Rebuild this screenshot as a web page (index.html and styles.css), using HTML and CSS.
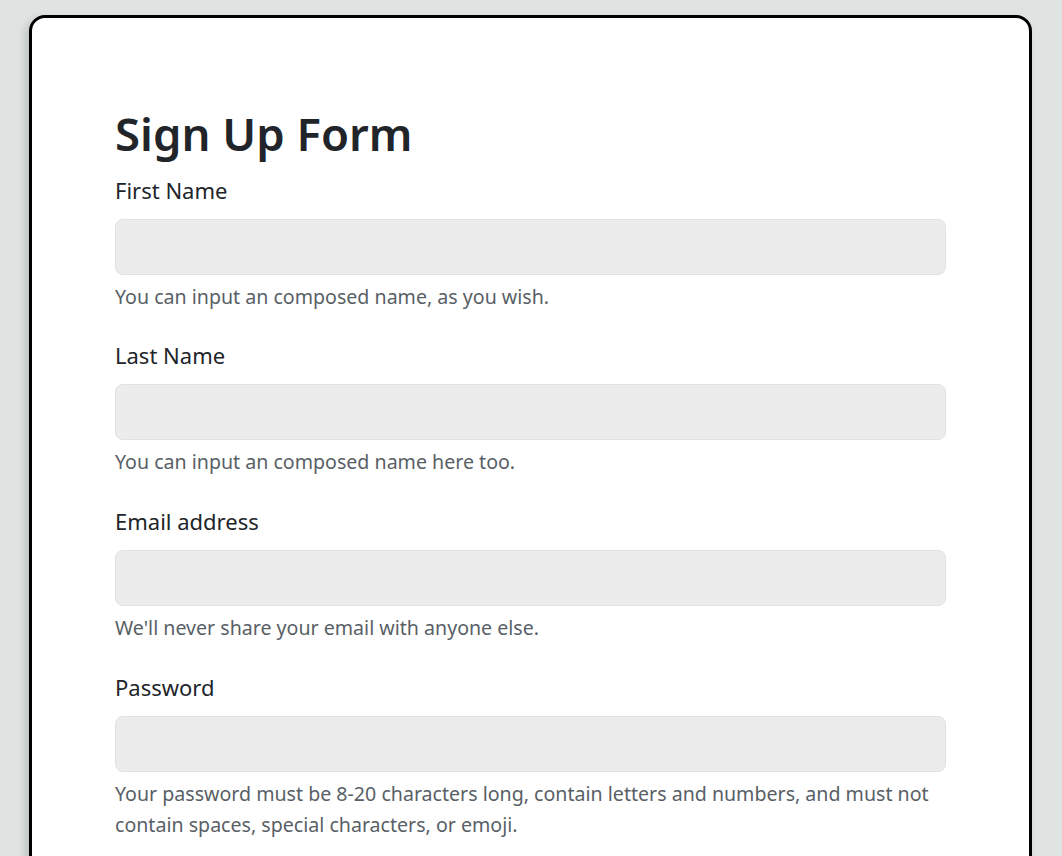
FILE: index.html
```html
<!DOCTYPE html>
<html lang="en">
<head>
<meta charset="utf-8">
<title>Sign Up Form</title>
<link rel="stylesheet" href="styles.css">
</head>
<body>
<div class="page">
  <main class="card">
    <h1 class="title">Sign Up Form</h1>
    <form class="form">
      <div class="group">
        <label class="label" for="fn">First Name</label>
        <input class="input" id="fn" type="text">
        <p class="help">You can input an composed name, as you wish.</p>
      </div>
      <div class="group">
        <label class="label" for="ln">Last Name</label>
        <input class="input" id="ln" type="text">
        <p class="help">You can input an composed name here too.</p>
      </div>
      <div class="group">
        <label class="label" for="em">Email address</label>
        <input class="input" id="em" type="email">
        <p class="help">We'll never share your email with anyone else.</p>
      </div>
      <div class="group">
        <label class="label" for="pw">Password</label>
        <input class="input" id="pw" type="password">
        <p class="help">Your password must be 8-20 characters long, contain letters and numbers, and must not contain spaces, special characters, or emoji.</p>
      </div>
    </form>
  </main>
</div>
</body>
</html>
```
FILE: styles.css
```css
html, body {
  margin: 0;
  padding: 0;
  height: 100%;
  overflow: hidden;
}
body {
  background: #dfe4e2;
  font-family: "Noto Sans", "Open Sans", sans-serif;
  color: #212529;
}
.page {
  padding: 15px 30px 0 29px;
}
.card {
  background: #fff;
  border: 3px solid #000;
  border-radius: 16px;
  box-shadow: -4px 4px 8px rgba(0,0,0,0.15);
  padding: 88px 83px 200px 83px;
  min-height: 900px;
}
.title {
  margin: 0 0 14px 0;
  font-size: 45.5px;
  font-weight: 600;
  line-height: 1.2;
}
.form {
  display: flex;
  flex-direction: column;
}
.group {
  display: flex;
  flex-direction: column;
  margin-bottom: 28.7px;
}
.label {
  font-size: 22px;
  line-height: 30px;
  margin-bottom: 14px;
}
.input {
  height: 56px;
  box-sizing: border-box;
  background: #ececec;
  border: 1px solid #dee2e6;
  border-radius: 8px;
  font-size: 20px;
  padding: 12px 16px;
  margin: 0;
}
.help {
  margin: 6px 0 0 0;
  font-size: 19.6px;
  line-height: 31px;
  color: #595f66;
}
```
